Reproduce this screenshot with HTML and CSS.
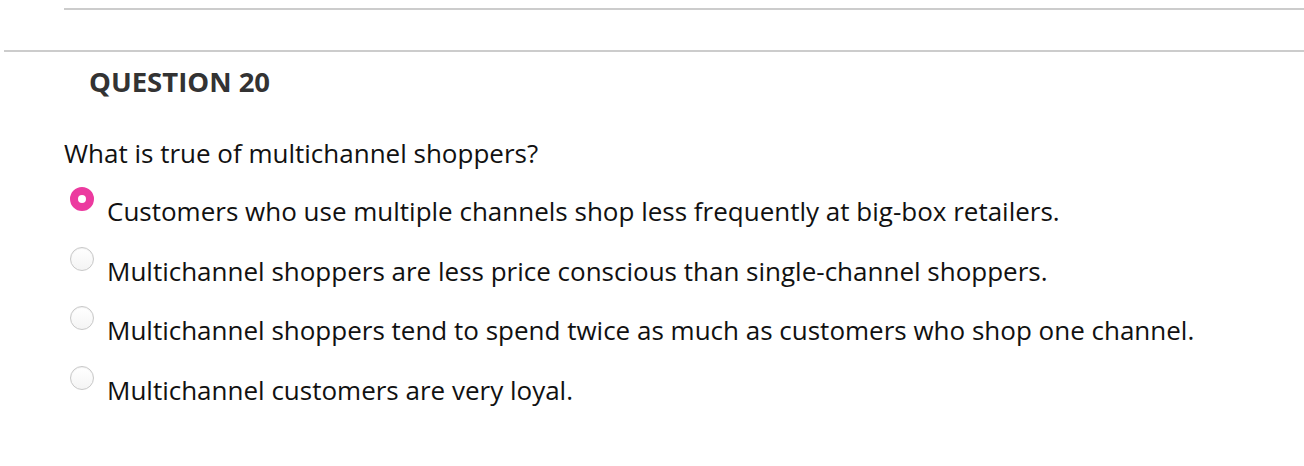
FILE: index.html
```html
<!DOCTYPE html>
<html>
<head>
<meta charset="utf-8">
<link rel="stylesheet" href="styles.css">
</head>
<body>
<div class="rule rule-top"></div>
<div class="rule rule-main"></div>
<section class="question">
  <h2 class="q-title">QUESTION 20</h2>
  <p class="q-text">What is true of multichannel shoppers?</p>
  <ul class="options">
    <li class="option selected"><span class="radio"></span><span class="label">Customers who use multiple channels shop less frequently at big-box retailers.</span></li>
    <li class="option"><span class="radio"></span><span class="label">Multichannel shoppers are less price conscious than single-channel shoppers.</span></li>
    <li class="option"><span class="radio"></span><span class="label">Multichannel shoppers tend to spend twice as much as customers who shop one channel.</span></li>
    <li class="option"><span class="radio"></span><span class="label">Multichannel customers are very loyal.</span></li>
  </ul>
</section>
</body>
</html>
```
FILE: styles.css
```css
html, body {
  margin: 0;
  padding: 0;
  background: #fff;
}
body {
  font-family: "Open Sans", "Liberation Sans", sans-serif;
  color: #111;
}
.rule {
  height: 0;
  border-top: 2px solid #cccccc;
}
.rule-top {
  margin: 8px 0 0 64px;
}
.rule-main {
  margin: 40px 0 0 4px;
}
.question {
  padding: 0 0 0 64px;
}
.q-title {
  margin: 11px 0 0 25px;
  font-size: 27.5px;
  line-height: 38px;
  font-weight: 700;
  color: #333;
}
.q-text {
  margin: 34px 0 0 0;
  font-size: 26px;
  line-height: 36px;
}
.options {
  list-style: none;
  margin: 22px 0 0 0;
  padding: 0;
}
.option {
  display: flex;
  align-items: flex-start;
  height: 59.7px;
  font-size: 26px;
  line-height: 36px;
}
.radio {
  box-sizing: border-box;
  width: 24px;
  height: 24px;
  border-radius: 50%;
  margin: -6px 13px 0 6px;
  border: 1px solid #c8c8c8;
  background: linear-gradient(#fff, #f4f4f4);
  box-shadow: inset 0 1px 1px rgba(0,0,0,0.06);
  flex: none;
}
.option.selected .radio {
  border: 8px solid #ec3a9f;
  background: #fff;
  box-shadow: none;
}
.label {
  display: block;
}
```
